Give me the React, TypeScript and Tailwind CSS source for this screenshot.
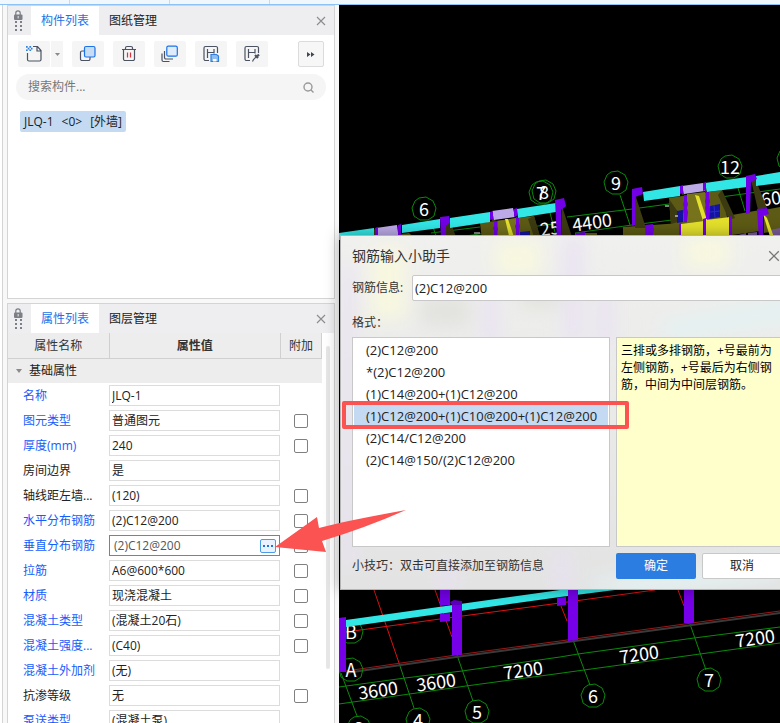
import { useState } from "react";
import type { ReactNode } from "react";
import clsx from "clsx";

interface Property {
  name: string;
  value: string;
  linked?: boolean;
  extra?: boolean;
  editing?: boolean;
}

const properties: Property[] = [
  { name: "名称", value: "JLQ-1", linked: true },
  { name: "图元类型", value: "普通图元", linked: true, extra: true },
  { name: "厚度(mm)", value: "240", linked: true, extra: true },
  { name: "房间边界", value: "是" },
  { name: "轴线距左墙...", value: "(120)", extra: true },
  { name: "水平分布钢筋", value: "(2)C12@200", linked: true, extra: true },
  { name: "垂直分布钢筋", value: "(2)C12@200", linked: true, extra: true, editing: true },
  { name: "拉筋", value: "A6@600*600", linked: true, extra: true },
  { name: "材质", value: "现浇混凝土", linked: true, extra: true },
  { name: "混凝土类型", value: "(混凝土20石)", linked: true, extra: true },
  { name: "混凝土强度...", value: "(C40)", linked: true, extra: true },
  { name: "混凝土外加剂", value: "(无)", linked: true },
  { name: "抗渗等级", value: "无", extra: true },
  { name: "泵送类型", value: "(混凝土泵)", linked: true },
];

const formats = [
  "(2)C12@200",
  "*(2)C12@200",
  "(1)C14@200+(1)C12@200",
  "(1)C12@200+(1)C10@200+(1)C12@200",
  "(2)C14/C12@200",
  "(2)C14@150/(2)C12@200",
];

function CloseIcon({ className }: { className?: string }) {
  return (
    <svg viewBox="0 0 10 10" className={className} fill="none" stroke="currentColor" strokeWidth="1.1">
      <path d="M1 1l8 8M9 1L1 9" />
    </svg>
  );
}

function PanelHeader({ tabs }: { tabs: string[] }) {
  return (
    <div className="flex h-[29px] shrink-0 items-stretch bg-[#eeeef0]">
      <div className="flex w-[23px] justify-center pt-1">
        <svg width="10" height="22" viewBox="0 0 10 22" className="mr-1">
          <path d="M2.8 5V3a2.2 2.2 0 0 1 4.4 0v2" fill="none" stroke="#7c7f85" strokeWidth="1.2" />
          <rect x="1" y="4.5" width="8.5" height="5.5" rx="1" fill="#7c7f85" />
          <rect x="4.6" y="6" width="1.2" height="2.4" fill="#d8d8da" />
          {[12, 16, 20].map((y) => (
            <path key={y} d={`M2 ${y}h2M7 ${y}h2`} stroke="#7c7f85" strokeWidth="2" />
          ))}
        </svg>
      </div>
      {tabs.map((tab, i) => (
        <button
          key={tab}
          className={clsx("w-[68px] text-center", i === 0 ? "bg-white text-[#1a73e8]" : "text-[#222]")}
        >
          {tab}
        </button>
      ))}
      <button className="mr-2 ml-auto" aria-label="关闭">
        <CloseIcon className="size-2.5 text-[#8c8c8c]" />
      </button>
    </div>
  );
}

function ToolButton({ label, children }: { label: string; children: ReactNode }) {
  return (
    <button className="flex h-[26px] w-8 items-center justify-center rounded-xs bg-[#f5f5f5]" aria-label={label}>
      <svg width="18" height="18" viewBox="0 0 18 18" fill="none" stroke="#4b5261" strokeWidth="1.2">
        {children}
      </svg>
    </button>
  );
}

const framePath =
  "M7 15.5H3.5a1.5 1.5 0 0 1-1.5-1.5V3A1.5 1.5 0 0 1 3.5 1.500H14a1.5 1.5 0 0 1 1.5 1.5V8M5.500 4V13M5.500 7.500H12M12 4V8.500";

function ComponentPanel() {
  return (
    <section className="flex flex-col border border-[#d4d4d4] bg-white">
      <PanelHeader tabs={["构件列表", "图纸管理"]} />
      <div className="flex items-center gap-[9px] px-2.5 pt-1.5">
        <div className="flex gap-px">
          <ToolButton label="新建">
            <path d="M8 1.500h4.500L16 5.500V14.500a1.500 1.500 0 0 1-1.500 1.500H4a1.500 1.500 0 0 1-1.500-1.500V8M12 1.500v4.500h4" />
            <g fill="#2f80e0" stroke="none">
              <path d="M1 1h1.700v1.700H1zM4.400 1h1.700v1.700H4.400zM2.700 2.700h1.700v1.700H2.700zM6 2.700h1.500v1.700H6zM1 4.400h1.700v1.700H1zM4.400 4.400h1.700v1.700H4.400z" />
            </g>
          </ToolButton>
          <button className="flex w-3 items-center justify-center bg-[#f5f5f5]" aria-label="更多新建">
            <svg width="5" height="3" viewBox="0 0 5 3">
              <path d="M0 0h5L2.500 3z" fill="#8a8a8a" />
            </svg>
          </button>
        </div>
        <ToolButton label="复制">
          <path d="M5 6H3a1.500 1.500 0 0 0-1.500 1.500V14A1.500 1.500 0 0 0 3 15.500h6.500A1.500 1.500 0 0 0 11 14v-2" />
          <rect x="5.500" y="1.500" width="10.500" height="10.500" rx="1.500" fill="#c9dcf5" stroke="#1a73e8" />
        </ToolButton>
        <ToolButton label="删除">
          <path d="M2 4.500h14M5.500 4.500V3A1.500 1.500 0 0 1 7 1.500h4A1.500 1.500 0 0 1 12.500 3V4.500M3.500 4.500v9.500A1.500 1.500 0 0 0 5 15.500h8a1.500 1.500 0 0 0 1.500-1.500V4.500" />
          <path d="M7.500 7.500v5M10.500 7.500v5" stroke="#e0303a" />
        </ToolButton>
        <ToolButton label="层间复制">
          <path d="M3.500 6v6.500A1.500 1.500 0 0 0 5 14h7M1 8.500V15a1.500 1.500 0 0 0 1.500 1.500h6" />
          <rect x="5.800" y="1.200" width="10.500" height="10" rx="1.500" fill="#dfecfb" stroke="#1a73e8" />
        </ToolButton>
        <ToolButton label="存档">
          <path d={framePath} />
          <path d="M9 9.500h5.500L16.500 11v5.500H9z" fill="#8fbdf0" stroke="#2f80e0" />
          <path d="M11 14h3.500v2.500H11z" fill="#fff" stroke="none" />
        </ToolButton>
        <ToolButton label="提取">
          <path d={framePath} />
          <path d="M9.500 16.500l1-2 3.500-3.500" />
          <path d="M12 10l3 3M14 11.500l2-2" strokeWidth="2.200" />
        </ToolButton>
        <button
          className="ml-auto flex size-[26px] items-center justify-center rounded-xs border border-[#dcdcdc] bg-[#f7f7f7]"
          aria-label="展开工具"
        >
          <svg width="8" height="5" viewBox="0 0 8 5">
            <path d="M0 0l3.500 2.500L0 5zM4 0l3.500 2.500L4 5z" fill="#3f4654" />
          </svg>
        </button>
      </div>
      <label className="mx-2 mt-[7px] flex h-[26px] items-center rounded-full bg-[#f5f5f5] px-3">
        <input className="min-w-0 flex-1 outline-none placeholder:text-[#777]" placeholder="搜索构件..." aria-label="搜索构件" />
        <svg width="11" height="11" viewBox="0 0 11 11" fill="none" stroke="#999" strokeWidth="1.400">
          <circle cx="5" cy="5" r="4" />
          <path d="M7.800 7.800L10.500 10.500" />
        </svg>
      </label>
      <ul className="mt-[11px] h-[187px] px-3">
        <li className="inline-flex h-[21px] items-center gap-2 rounded-xs bg-[#c3daf2] px-1 text-[#222]">
          <span>JLQ-1</span>
          <span>&lt;0&gt;</span>
          <span>[外墙]</span>
        </li>
      </ul>
    </section>
  );
}

function PropertyRow({ item }: { item: Property }) {
  return (
    <tr className="h-[25px]">
      <th scope="row" className={clsx("truncate pl-[15px] text-left font-normal", item.linked ? "text-[#155dfc]" : "text-[#222]")}>
        {item.name}
      </th>
      <td>
        <div
          className={clsx(
            "flex h-[21px] w-[171px] items-center border bg-white pr-[3px]",
            item.editing ? "border-[#5b86cf] pl-1" : "border-[#dcdcdc] pl-0.5"
          )}
        >
          <input
            className={clsx("w-full min-w-0 flex-1 outline-none", item.editing ? "text-[#555]" : "text-[#222]")}
            defaultValue={item.value}
            aria-label={item.name}
          />
          {item.editing && (
            <button
              className="flex h-3.5 w-4 items-center justify-center gap-0.5 rounded-xs border border-[#4a9be8] bg-[#eaf3fd]"
              aria-label="打开输入助手"
            >
              <i className="size-0.5 bg-[#1a73e8]" />
              <i className="size-0.5 bg-[#1a73e8]" />
              <i className="size-0.5 bg-[#1a73e8]" />
            </button>
          )}
        </div>
      </td>
      <td>
        {item.extra && (
          <input
            type="checkbox"
            className="mx-auto block size-3.5 appearance-none rounded-xs border border-[#808080] bg-white"
            aria-label={`附加 ${item.name}`}
          />
        )}
      </td>
    </tr>
  );
}

function PropertyPanel() {
  return (
    <section className="flex min-h-0 flex-1 flex-col border border-b-0 border-[#d4d4d4] bg-white">
      <PanelHeader tabs={["属性列表", "图层管理"]} />
      <div className="flex min-h-0 flex-1 overflow-hidden">
        <div className="min-w-0 flex-1">
          <table className="w-full table-fixed border-collapse">
            <colgroup>
              <col className="w-[101px]" />
              <col />
              <col className="w-[41px]" />
            </colgroup>
            <thead>
              <tr className="h-[25px] border-b border-[#d0d0d0] bg-[#ededed] text-[#333]">
                <th className="border-r border-[#d0d0d0] pt-0.5 font-normal">属性名称</th>
                <th className="border-r border-[#d0d0d0] pt-0.5 font-bold">属性值</th>
                <th className="border-r border-[#d0d0d0] pt-0.5 font-normal">附加</th>
              </tr>
            </thead>
            <tbody>
              <tr className="h-[25px] bg-[#ededed]">
                <td colSpan={3} className="pl-2">
                  <div className="flex items-center gap-[7px]">
                    <svg width="6" height="4" viewBox="0 0 6 4">
                      <path d="M0 0h6L3 4z" fill="#8a8a8a" />
                    </svg>
                    基础属性
                  </div>
                </td>
              </tr>
              {properties.map((item) => (
                <PropertyRow key={item.name} item={item} />
              ))}
            </tbody>
          </table>
        </div>
        <div className="w-3 pt-[13px] pl-1">
          <div className="h-[323px] w-1 rounded-full bg-[#e6e6e6]" />
        </div>
      </div>
    </section>
  );
}

const bubbles = [
  { x: 424, y: 209, text: "6" },
  { x: 541, y: 193, text: "7" },
  { x: 544, y: 192, text: "8" },
  { x: 616, y: 183, text: "9" },
  { x: 730, y: 167, text: "12" },
  { x: 789, y: 159, text: "" },
  { x: 351, y: 632, text: "B" },
  { x: 351, y: 670, text: "A" },
  { x: 359, y: 728, text: "3" },
  { x: 418, y: 720, text: "4" },
  { x: 477, y: 712, text: "5" },
  { x: 593, y: 696, text: "6" },
  { x: 709, y: 680, text: "7" },
];

const dimensions = [
  { x: 592, y: 222, text: "4400" },
  { x: 550, y: 228, text: "25" },
  { x: 771, y: 198, text: "60" },
  { x: 378, y: 690, text: "3600" },
  { x: 436, y: 682, text: "3600" },
  { x: 523, y: 670, text: "7200" },
  { x: 639, y: 654, text: "7200" },
  { x: 755, y: 638, text: "7200" },
  { x: 334, y: 697, text: "0" },
];

function ModelView() {
  return (
    <svg
      viewBox="339 5 441 718"
      preserveAspectRatio="xMinYMin slice"
      className="h-full w-full bg-black font-['Noto_Sans_CJK_SC',sans-serif] text-[18px]"
    >
      {/* axis grid */}
      <g stroke="#0a8a0a" fill="none">
        <path d="M431 233L480 227M465 236L560 223M567 217L632 209L780 189M575 233L632 225L680 219M620 195L630 225M738 188L745 211M431 221L436 236M548 205L556 236" />
        <path d="M339 687L405 678L462 671L560 657L578 654L694 638L780 627M339 704L466 686L555 674L584 670L780 643" />
        <path d="M341 673L357 716M399 663L414 708M457 655L473 701M573 640L590 685M690 624L706 670" />
      </g>
      <g stroke="#e01010" fill="none">
        <path d="M346 632L440 619L560 603L655 590M374 590L399 663M435 590L452 637M561 606L567 621M678 590L684 606" />
      </g>
      <path d="M346 673L456 657L560 643L780 613" stroke="#3a3a3a" strokeWidth="2" fill="none" />
      <path d="M346 671L456 655L560 641L780 611" stroke="#9a1818" fill="none" />

      {bubbles.map(({ x, y, text }) => (
        <g key={`${x}-${y}`}>
          <path
            transform={`translate(${x} ${y})`}
            d="M-5 -11L2 -12L9 -8L12 -1L10 7L4 11L-4 11L-10 7L-12 -1L-9 -8Z"
            stroke="#0a8a0a"
            fill="none"
          />
          <text x={x} y={y + 7} fill="#fff" textAnchor="middle">
            {text}
          </text>
        </g>
      ))}
      {dimensions.map(({ x, y, text }) => (
        <text key={x} x={x} y={y + 7} fill="#fff" textAnchor="middle" transform={`rotate(-8 ${x} ${y})`}>
          {text}
        </text>
      ))}

      {/* walls, upper floor */}
      <g fill="#5c5a14">
        <path d="M391 236l18-3 8 7H391zM480 223L534 216L541 240H482zM669 198L722 190L728 222L671 226zM623 227L681 223V240H623zM732 215L760 210V231L732 235zM764 210L780 207V230L764 233zM575 233h22v7h-22z" />
      </g>
      <path d="M687 194L705 192V221L687 223zM498 221L516 218V240H498z" fill="#76731c" />
      <g fill="#3c3a10">
        <path d="M449 217L457 240H446V226zM562 206L573 240H561zM635 194L646 228H635zM751 180L755 178L767 208L758 210zM722 190L735 218L729 220L718 195zM534 216l7 24h-6l-7-21zM669 199l9 13v10l-7 2z" />
        <path d="M372 231l5-3 4 12h-8zM398 227l5 13h-5zM491 214l5 7-4 1zM681 188l5 6-4 1zM704 185l5 6-4 1z" />
      </g>
      <g fill="#33e6e6">
        <path d="M339 233L374 228V240H339zM402 225L440 219V228L402 233zM450 218L490 212V222L450 228zM517 209L556 203V212L518 218z" />
        <path d="M643 192L680 186V196L644 201zM705 183L747 177V187L707 192zM756 176L780 172V183L756 186z" />
      </g>
      <path
        d="M376 228L397 225L399 240H377zM492 211L513 208L515 217L494 220zM682 186L703 183L705 191L684 194z"
        fill="#bcaae8"
      />
      <path d="M520 232l10-1v9h-10zM677 211l6-1v12l-6 1zM710 206l10-2v13l-11 2z" fill="#1414a0" />
      <path d="M714 205l1 13M710 212l10-1" stroke="#2c2cc8" fill="none" />
      <path d="M738 235l8-2v7h-8zM748 233l9-1v8h-9zM770 230l10-2v12h-10z" fill="#7a5a98" />
      <path
        d="M681 224L704 221V240H681zM706 220L730 217V240H706zM505 219L508 219L515 240H510zM695 195L699 196L707 220L703 221zM763 214L767 218L775 240H771z"
        fill="#e4e02c"
      />
      <g fill="#7200e6">
        <path d="M440 217L449 216L450 222L446 226V240H441zM555 200L564 198L566 206L561 210V240H557zM632 189L642 187L643 194L635 197V225L632 226zM746 176L755 174L757 179L751 182L750 213L746 214z" />
        <path d="M645 225L653 224L654 230L652 240H646zM757 209L767 208L769 214L763 216V240H759zM729 217l3-1v24h-3zM679 224l2-1v17h-2zM703 219l3-1v20h-3zM375 228l3-1v13h-3zM398 225l3-1v13h-3zM576 233l9-1v8h-9z" />
        <path d="M490 212l3-1v8l-3 1zM514 209l3-1v8l-3 1zM680 186l3-1v8l-3 1zM703 183l3-1v8l-3 1z" />
        <path d="M494 221l3 0v5l1 3-1 3v8h-3v-9l-1-3 1-2zM516 217l3 1v5l1 3-1 4v10h-3v-10l-1-4 1-2zM684 195l3 0v6l1 3-1 4 1 4-1 10h-3v-8l-1-3 1-3-1-4 1-3zM706 192l3 0v6l1 3-1 4 1 4-1 10h-3v-8l-1-3 1-3-1-4 1-3z" />
      </g>
      <path d="M474 233h6M665 206h4M675 216h3" stroke="#fff" />

      {/* walls, lower floor */}
      <path d="M346 620L560 590L615 586V590L560 597L346 627zM339 625h4v6h-4z" fill="#33e6e6" />
      <path d="M440 588h10v17l-10 1z" fill="#7200e6" />
      <g fill="#7600e8">
        <path d="M339 618l7-1v55h-7zM440 614l10-1v8l-10 1zM452 602l10-1v54h-10zM568 588h10v52l-10 1zM557 598l9-1v8l-9 1zM684 588h10v35h-10z" />
        <path d="M450 602l4-2 8 1v4h-10z" fill="#5d00bd" />
      </g>
    </svg>
  );
}

// Frosted colours of the model showing through the dialog
function FrostedBackdrop() {
  return (
    <svg
      className="absolute inset-0 h-full w-full"
      viewBox="0 0 454 352"
      preserveAspectRatio="none"
      aria-hidden="true"
    >
      <defs>
        <filter id="frost" x="-20%" y="-20%" width="140%" height="140%">
          <feGaussianBlur stdDeviation="9" />
        </filter>
      </defs>
      <g filter="url(#frost)">
        <path d="M30 12h35v70H30zM155 5h45v35h-45zM345 0h45v32h-45z" fill="#f8f8e0" />
        <path d="M0 30h12v300H0zM225 0h16v105h-16zM258 50h14v60h-14zM143 50h14v60h-14zM100 325h14v30h-14zM215 315h14v40h-14z" fill="#e9e1f3" />
        <path d="M180 50h40v22h-40zM80 60h50v30H80z" fill="#e2e3df" />
        <path d="M320 85L454 60V85L330 105zM240 345l200-25v20l-150 20z" fill="#e4f1f1" />
      </g>
    </svg>
  );
}

function RebarDialog() {
  const [selected, setSelected] = useState(3);

  return (
    <div
      role="dialog"
      aria-label="钢筋输入小助手"
      className="absolute top-[230px] left-px w-[454px] border border-[#b4b4b4] bg-linear-to-b from-[#f0f0ee] to-[#e3e3e3] text-[#333] shadow-[0_0_14px_rgba(0,0,0,0.35)]"
    >
      <FrostedBackdrop />
      <div className="relative px-[11px] pb-2.5">
        <div className="flex h-[39px] items-center justify-between">
          <h2 className="text-sm">钢筋输入小助手</h2>
          <button className="mr-0.5" aria-label="关闭">
            <CloseIcon className="size-3 text-[#777]" />
          </button>
        </div>
        <label className="flex items-center gap-2">
          <span className="w-[52px] shrink-0 whitespace-nowrap">钢筋信息:</span>
          <input
            className="h-[26px] min-w-0 flex-1 rounded-xs border border-[#c8c8c8] bg-white px-0.5 text-[13px] text-[#222] outline-none"
            defaultValue="(2)C12@200"
          />
        </label>
        <p className="mt-3 h-[24px] leading-5">格式：</p>
        <div className="flex h-[210px] gap-1.5">
          <ul role="listbox" aria-label="格式" className="w-[258px] border border-[#c8c8c8] bg-white p-px">
            {formats.map((format, i) => (
              <li
                key={format}
                role="option"
                aria-selected={i === selected}
                onClick={() => setSelected(i)}
                className={clsx(
                  "h-[22px] pl-3 text-[13px] leading-[22px] whitespace-nowrap text-[#222]",
                  i === selected && "bg-[#c3daf2]"
                )}
              >
                {format}
              </li>
            ))}
          </ul>
          <p className="flex-1 border border-[#c8c8c8] bg-[#ffffcc] px-1 pt-1 leading-[17px] text-black">
            三排或多排钢筋，+号最前为左侧钢筋，+号最后为右侧钢筋，中间为中间层钢筋。
          </p>
        </div>
        <div className="mt-1.5 flex items-center gap-1.5">
          <span className="flex-1">小技巧：双击可直接添加至钢筋信息</span>
          <button className="h-[26px] w-20 rounded-xs bg-[#2b7de1] text-white">确定</button>
          <button className="h-[26px] w-20 rounded-xs border border-[#c8c8c8] bg-white text-[#222]">取消</button>
        </div>
      </div>
    </div>
  );
}

export default function App() {
  return (
    <div className="relative flex h-screen flex-col overflow-hidden bg-[#f8f8f8] font-['Open_Sans','Noto_Sans_CJK_SC',sans-serif] text-xs text-[#222]">
      <div className="flex h-[5px] shrink-0 border-b border-[#8cc2f5] bg-[#f1f8fd]">
        <div className="w-[70px] border-r border-[#d0d8e0]" />
        <div className="w-[100px] border-r border-[#d0d8e0]" />
        <div className="w-[100px] border-r border-[#d0d8e0]" />
      </div>
      <div className="flex min-h-0 flex-1">
        <div className="w-[3px] shrink-0 border-r border-[#d4d4d4] bg-white" />
        <aside className="ml-1 flex w-[328px] shrink-0 flex-col gap-1">
          <ComponentPanel />
          <PropertyPanel />
        </aside>
        <main className="relative ml-1 min-w-0 flex-1">
          <ModelView />
          <RebarDialog />
          <div className="pointer-events-none absolute top-[396px] left-[3px] h-7 w-[287px] rounded-xs border-4 border-[#fb5252]" />
          <svg
            width="131"
            height="42"
            viewBox="275 510 131 42"
            className="pointer-events-none absolute top-[505px] -left-16"
            aria-hidden="true"
          >
            <path d="M275 547L317 517L319 528Q340 522 406 510Q365 528 322 541L326 552Z" fill="#fb5252" />
          </svg>
        </main>
      </div>
    </div>
  );
}
